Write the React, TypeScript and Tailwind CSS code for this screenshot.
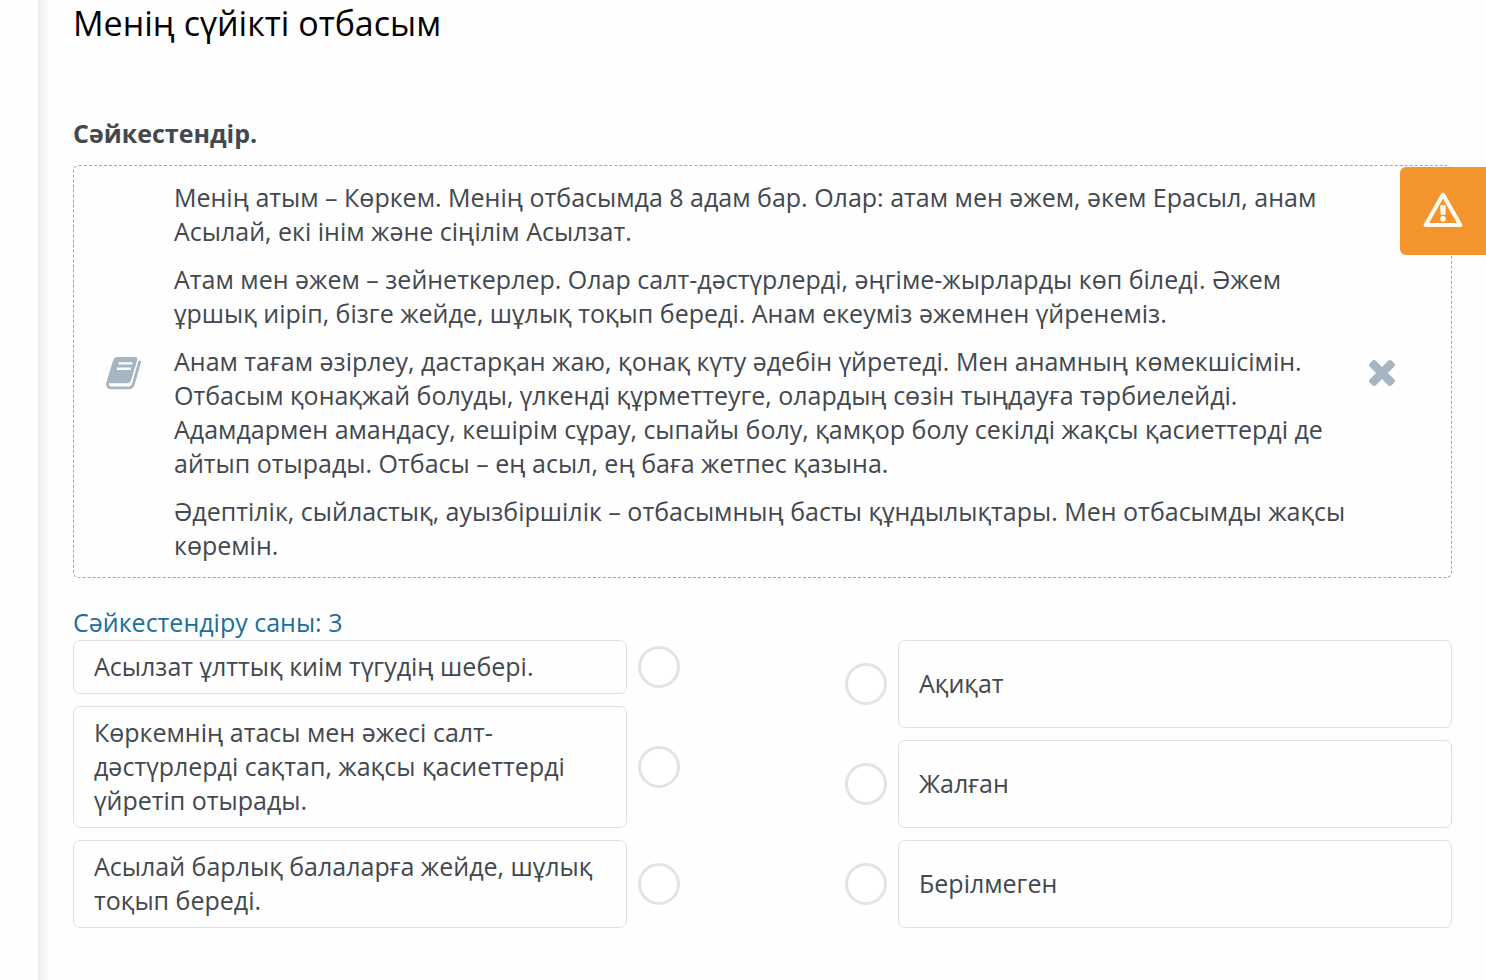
import React from "react";

const paragraphs: string[] = [
  "Менің атым – Көркем. Менің отбасымда 8 адам бар. Олар: атам мен әжем, әкем Ерасыл, анам Асылай, екі інім және сіңілім Асылзат.",
  "Атам мен әжем – зейнеткерлер. Олар салт-дәстүрлерді, әңгіме-жырларды көп біледі. Әжем ұршық иіріп, бізге жейде, шұлық тоқып береді. Анам екеуміз әжемнен үйренеміз.",
  "Анам тағам әзірлеу, дастарқан жаю, қонақ күту әдебін үйретеді. Мен анамның көмекшісімін. Отбасым қонақжай болуды, үлкенді құрметтеуге, олардың сөзін тыңдауға тәрбиелейді. Адамдармен амандасу, кешірім сұрау, сыпайы болу, қамқор болу секілді жақсы қасиеттерді де айтып отырады. Отбасы – ең асыл, ең баға жетпес қазына.",
  "Әдептілік, сыйластық, ауызбіршілік – отбасымның басты құндылықтары. Мен отбасымды жақсы көремін.",
];

const statements: string[] = [
  "Асылзат ұлттық киім түгудің шебері.",
  "Көркемнің атасы мен әжесі салт-дәстүрлерді сақтап, жақсы қасиеттерді үйретіп отырады.",
  "Асылай барлық балаларға жейде, шұлық тоқып береді.",
];

const answers: string[] = ["Ақиқат", "Жалған", "Берілмеген"];

function BookIcon() {
  return (
    <svg viewBox="0 0 36 34" className="mt-1 h-[34px] w-9 shrink-0" aria-hidden="true">
      <path
        d="M33.6 6 L27.4 28 Q26.2 31.8 22.8 31.8 H4.6 Q1.4 31.6 1.4 27.6"
        fill="none"
        stroke="#a3b6c1"
        strokeWidth="2.8"
        strokeLinecap="round"
        strokeLinejoin="round"
      />
      <path
        d="M11.5 1 H28.5 Q32 1 31.1 4.4 L25 24.6 Q24.2 27.2 21.4 27.2 H3 Q0.2 27.2 1 24.2 L7.3 4 Q8.3 1 11.5 1 Z"
        fill="#a3b6c1"
      />
      <path d="M12.6 7.4 H26.4 M11 12.8 H24.8" stroke="#fff" strokeWidth="2.4" />
    </svg>
  );
}

function CrossIcon() {
  return (
    <svg viewBox="302 366 1188 1188" className="size-[26px]" aria-hidden="true">
      <path
        fill="#a3b6c1"
        d="M1490 1322q0 40-28 68l-136 136q-28 28-68 28t-68-28l-294-294-294 294q-28 28-68 28t-68-28l-136-136q-28-28-28-68t28-68l294-294-294-294q-28-28-28-68t28-68l136-136q28-28 68-28t68 28l294 294 294-294q28-28 68-28t68 28l136 136q28 28 28 68t-28 68l-294 294 294 294q28 28 28 68z"
      />
    </svg>
  );
}

function WarningIcon() {
  return (
    <svg viewBox="0 0 40 36" className="h-9 w-10" aria-hidden="true">
      <path d="M20 2.6 L37.4 33 H2.6 Z" fill="none" stroke="#fffaf0" strokeWidth="4" strokeLinejoin="round" />
      <path d="M17.4 13.6 H22.6 L22 22.6 H18 Z" fill="#fffaf0" stroke="#fffaf0" strokeWidth="0.6" strokeLinejoin="round" />
      <circle cx="20" cy="26.8" r="2.8" fill="#fffaf0" />
    </svg>
  );
}

function MatchRow({ id, text, side }: { id: string; text: string; side: "left" | "right" }) {
  return (
    <li className={side === "left" ? "flex items-center gap-[11px]" : "flex flex-row-reverse items-center gap-[11px]"}>
      <div
        id={id}
        className={
          side === "left"
            ? "min-w-0 flex-1 rounded-[7px] border border-[#dce1e5] px-5 pt-2 pb-[10px]"
            : "flex min-h-[88px] min-w-0 flex-1 items-center rounded-[7px] border border-[#dce1e5] px-5 pt-2 pb-[10px]"
        }
      >
        {text}
      </div>
      <button
        type="button"
        aria-labelledby={id}
        className="size-[42px] shrink-0 rounded-full border-3 border-[#dfe4e7] bg-white"
      />
    </li>
  );
}

export default function App() {
  return (
    <div className="flex min-h-screen bg-[#fefefe] font-['Open_Sans','Noto_Sans',sans-serif] text-[25px] leading-[34px] text-[#42484e]">
      <div className="w-[38px] shrink-0" />
      <main className="min-w-0 flex-1 bg-linear-to-r from-[#ededed] to-[#fefefe] to-[12px] pr-[34px] pb-10 pl-[35px]">
        <h1 className="text-[34px] leading-[46px] text-black">Менің сүйікті отбасым</h1>
        <h2 className="mt-[70px] font-bold">Сәйкестендір.</h2>
        <section className="mt-[15px] flex items-center rounded-[6px] border border-dashed border-[#93abb3] pt-[14px] pr-14 pb-[15px] pl-8">
          <BookIcon />
          <div className="ml-8 flex min-w-0 flex-1 flex-col gap-[14px]">
            {paragraphs.map((text) => (
              <p key={text}>{text}</p>
            ))}
          </div>
          <button type="button" aria-label="Жабу" className="mt-1 ml-4 shrink-0">
            <CrossIcon />
          </button>
        </section>
        <p className="mt-[27px] mb-px text-[#1b6f9c]">Сәйкестендіру саны: 3</p>
        <div className="flex justify-between gap-[165px]">
          <ul className="flex min-w-0 flex-1 flex-col gap-3">
            {statements.map((text, i) => (
              <MatchRow key={text} id={`statement-${i}`} text={text} side="left" />
            ))}
          </ul>
          <ul className="flex min-w-0 flex-1 flex-col gap-3">
            {answers.map((text, i) => (
              <MatchRow key={text} id={`answer-${i}`} text={text} side="right" />
            ))}
          </ul>
        </div>
      </main>
      <button
        type="button"
        aria-label="Қате туралы хабарлау"
        className="fixed top-[167px] right-0 flex h-[88px] w-[86px] items-center justify-center rounded-l-[6px] bg-[#f4942f] pb-0.5"
      >
        <WarningIcon />
      </button>
    </div>
  );
}
